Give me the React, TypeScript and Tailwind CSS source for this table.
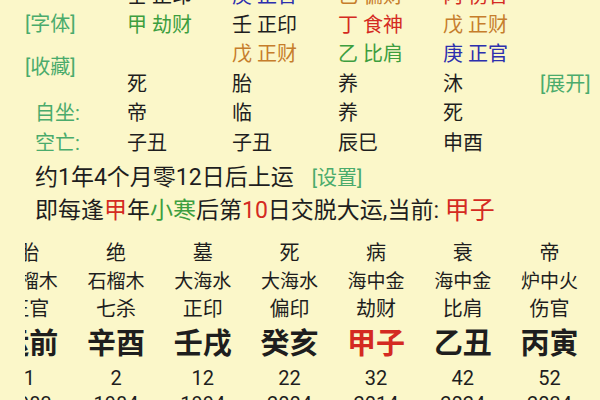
const FONT = "font-['Roboto','Noto_Sans_CJK_SC',sans-serif]";

type Cell = { t: string; c: string };

const BLACK = 'text-[#1e1e1e]';
const GREEN = 'text-[#3d9e3f]';
const RED = 'text-[#d42a22]';
const ORANGE = 'text-[#c67d2c]';
const BLUE = 'text-[#2c2fae]';
const LABEL = 'text-[#4aab6c]';

const topRows: { label: string; cells: Cell[]; extra?: string }[] = [
  {
    label: '',
    cells: [
      { t: '壬 正印', c: BLACK },
      { t: '庚 正官', c: BLUE },
      { t: '己 偏财', c: ORANGE },
      { t: '丙 伤官', c: RED },
    ],
  },
  {
    label: '[字体]',
    cells: [
      { t: '甲 劫财', c: GREEN },
      { t: '壬 正印', c: BLACK },
      { t: '丁 食神', c: RED },
      { t: '戊 正财', c: ORANGE },
    ],
  },
  {
    label: '',
    cells: [
      { t: '', c: BLACK },
      { t: '戊 正财', c: ORANGE },
      { t: '乙 比肩', c: GREEN },
      { t: '庚 正官', c: BLUE },
    ],
  },
  {
    label: '',
    cells: [
      { t: '死', c: BLACK },
      { t: '胎', c: BLACK },
      { t: '养', c: BLACK },
      { t: '沐', c: BLACK },
    ],
    extra: '[展开]',
  },
  {
    label: '自坐:',
    cells: [
      { t: '帝', c: BLACK },
      { t: '临', c: BLACK },
      { t: '养', c: BLACK },
      { t: '死', c: BLACK },
    ],
  },
  {
    label: '空亡:',
    cells: [
      { t: '子丑', c: BLACK },
      { t: '子丑', c: BLACK },
      { t: '辰巳', c: BLACK },
      { t: '申酉', c: BLACK },
    ],
  },
];

const colWidths = ['w-[105px]', 'w-[106px]', 'w-[105px]', 'w-[97px]'];

const dayun = [
  { state: '胎', nayin: '石榴木', god: '正官', gz: '运前', age: '1', year: '1983' },
  { state: '绝', nayin: '石榴木', god: '七杀', gz: '辛酉', age: '2', year: '1984' },
  { state: '墓', nayin: '大海水', god: '正印', gz: '壬戌', age: '12', year: '1994' },
  { state: '死', nayin: '大海水', god: '偏印', gz: '癸亥', age: '22', year: '2004' },
  { state: '病', nayin: '海中金', god: '劫财', gz: '甲子', age: '32', year: '2014' },
  { state: '衰', nayin: '海中金', god: '比肩', gz: '乙丑', age: '42', year: '2024' },
  { state: '帝', nayin: '炉中火', god: '伤官', gz: '丙寅', age: '52', year: '2034' },
];

export default function App() {
  return (
    <div className={`w-[600px] h-[400px] overflow-hidden bg-[#fbf7c9] ${FONT}`}>
      {/* 四柱 section */}
      <div className="-mt-[19px] flex flex-col">
        {topRows.map((row, i) => (
          <div key={i} className="flex h-[29.4px] items-center text-[20px] leading-none">
            <div className="w-[127px] shrink-0 h-full flex items-center">
              {i === 2 ? (
                <span className={`${LABEL} pl-[25px] pt-[26px] text-[20px]`}>[收藏]</span>
              ) : row.label.startsWith('[') ? (
                <span className={`${LABEL} pl-[25px] -mt-[2px]`}>{row.label}</span>
              ) : (
                <span className={`${LABEL} pl-[35px]`}>{row.label}</span>
              )}
            </div>
            {row.cells.map((cell, j) => (
              <div key={j} className={`${colWidths[j]} shrink-0 whitespace-pre ${cell.c}`}>
                {cell.t}
              </div>
            ))}
            {row.extra && <div className={`${LABEL} whitespace-nowrap`}>{row.extra}</div>}
          </div>
        ))}
      </div>

      {/* 起运 */}
      <div className="mt-[4px] h-[33px] flex items-center pl-[35px] text-[23px] text-[#1e1e1e] leading-none">
        <span>约1年4个月零12日后上运</span>
        <span className={`${LABEL} ml-[18px] text-[20px]`}>[设置]</span>
      </div>
      <div className="h-[32px] flex items-center pl-[35px] text-[23px] text-[#1e1e1e] leading-none whitespace-pre">
        <span>即每逢</span>
        <span className={RED}>甲</span>
        <span>年</span>
        <span className={GREEN}>小寒</span>
        <span>后第</span>
        <span className={RED}>10</span>
        <span>日交脱大运,当前: </span>
        <span className={`${RED} text-[25px]`}>甲子</span>
      </div>

      {/* 大运 (horizontally scrolled strip) */}
      <div className="mt-[13px] ml-[25px] overflow-hidden">
        <div className="-ml-[39px] flex">
          {dayun.map((d) => (
            <div key={d.gz} className="w-[86.7px] shrink-0 flex flex-col items-center text-[#1e1e1e] leading-none whitespace-nowrap">
              <div className="h-[28px] flex items-center text-[20px]">{d.state}</div>
              <div className="h-[28px] flex items-center text-[19px]">{d.nayin}</div>
              <div className="h-[28px] flex items-center text-[20px]">{d.god}</div>
              <div className={`h-[42px] flex items-center text-[29px] font-bold ${d.gz === '甲子' ? RED : ''}`}>
                {d.gz}
              </div>
              <div className="h-[25px] flex items-center text-[20px]">{d.age}</div>
              <div className="h-[30px] flex items-start pt-[4px] text-[20px]">{d.year}</div>
            </div>
          ))}
        </div>
      </div>
    </div>
  );
}
